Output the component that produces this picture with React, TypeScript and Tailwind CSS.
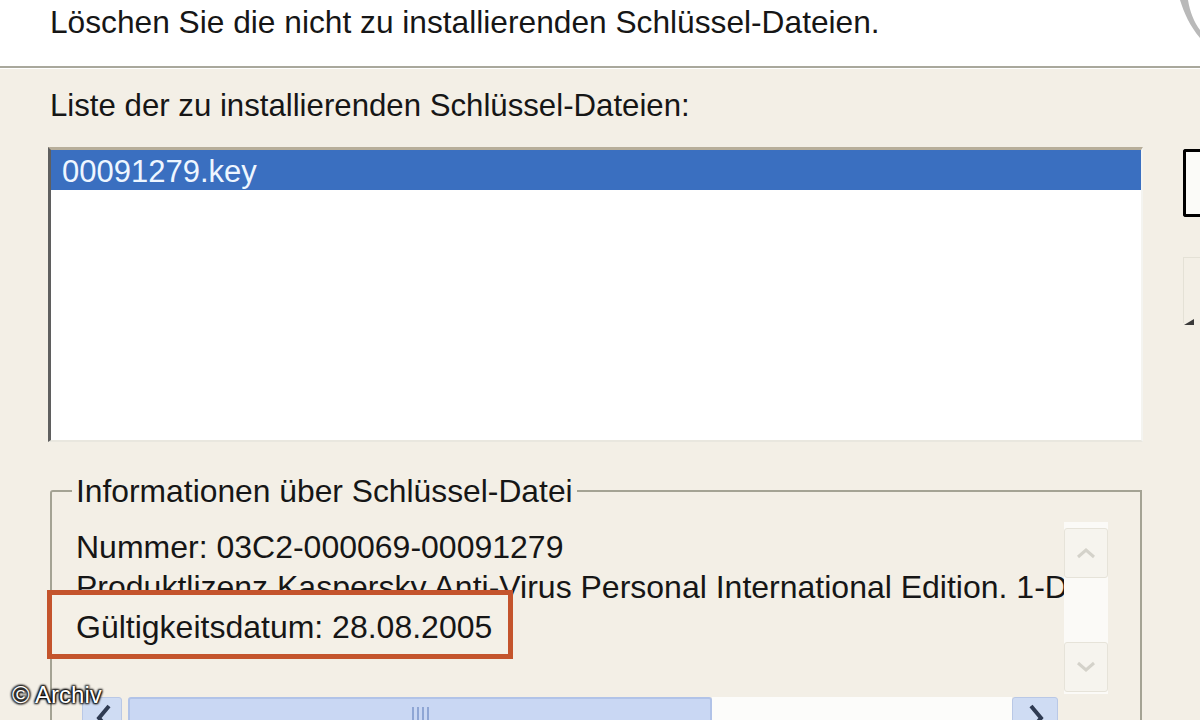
export default function App() {
  return (
    <div className="relative h-[720px] w-[1200px] overflow-hidden bg-[#f3efe6] font-['Liberation_Sans',Arial,sans-serif] text-[31px] leading-[36px] text-[#161616]">
      {/* Kopfbereich */}
      <div className="h-[66px] bg-white pl-[50px] pt-[4px]">
        <p className="whitespace-nowrap text-[31.7px]">Löschen Sie die nicht zu installierenden Schlüssel-Dateien.</p>
      </div>
      <svg className="absolute left-[1170px] top-0" width="30" height="50" viewBox="0 0 30 50">
        <path d="M10 0 C14 13 20 26 30 38 L30 30 C24 22 20 12 18 0 Z" fill="#b9b9b9" />
      </svg>
      <div className="h-[3px] border-t-2 border-[#a9a89c] bg-white" />

      <div className="flex">
        {/* Linke Spalte */}
        <div className="w-[1145px] pl-[48px]">
          <p className="mt-[19px] whitespace-nowrap pl-[2px] text-[31.2px]">Liste der zu installierenden Schlüssel-Dateien:</p>

          {/* Listbox */}
          <div className="mt-[23px] h-[295px] w-[1095px] border-l-[3px] border-t-[3px] border-r-2 border-b-2 border-l-[#5f5f5f] border-t-[#b7ae9a] border-r-[#f4f4f0] border-b-[#e9e7df] bg-white">
            <div className="flex h-[40px] w-[1090px] items-center bg-[#3a6fc0] pl-[11px] pt-[3px] text-[#eef6ff]">
              00091279.key
            </div>
          </div>

          {/* Gruppe */}
          <fieldset className="mt-[31px] ml-[2px] w-[1092px] rounded-tl-[3px] border-2 border-b-0 border-[#a4a394] pl-[20px] text-[31.8px]">
            <legend className="whitespace-nowrap px-[4px] leading-[36px]">Informationen über Schlüssel-Datei</legend>
            <div className="mt-[13px] w-[1040px]">
              <div className="flex h-[172px]">
                <div className="w-[992px] overflow-hidden whitespace-nowrap pl-[4px] pt-[5px] text-[32px] leading-[40px]">
                  <p>Nummer: 03C2-000069-00091279</p>
                  <p>Produktlizenz Kaspersky Anti-Virus Personal International Edition. 1-Desktop</p>
                  <p className="relative z-10">Gültigkeitsdatum: 28.08.2005</p>
                </div>
                {/* vertikale Bildlaufleiste */}
                <div className="flex w-[44px] flex-col bg-[#fbfaf7]">
                  <div className="mt-[6px] flex h-[50px] items-center justify-center rounded-[3px] border border-[#e6e3d9] bg-[#f6f4ee]">
                    <svg width="22" height="14" viewBox="0 0 22 14">
                      <path d="M3 11 L11 4 L19 11" fill="none" stroke="#d4d2ca" strokeWidth="3" />
                    </svg>
                  </div>
                  <div className="flex-1" />
                  <div className="mb-[2px] flex h-[50px] items-center justify-center rounded-[3px] border border-[#e6e3d9] bg-[#f6f4ee]">
                    <svg width="22" height="14" viewBox="0 0 22 14">
                      <path d="M3 3 L11 10 L19 3" fill="none" stroke="#d4d2ca" strokeWidth="3" />
                    </svg>
                  </div>
                </div>
              </div>

              {/* horizontale Bildlaufleiste */}
              <div className="flex h-[30px] pl-[10px] pt-[3px]">
                <div className="relative h-[40px] w-[40px] overflow-hidden rounded-[3px] border border-[#b9c8e6] bg-[#cfdcf3]">
                  <svg className="absolute left-[8px] top-[6px]" width="24" height="24" viewBox="0 0 24 24">
                    <path d="M18 2 L8 14 L18 26" fill="none" stroke="#2f3b52" strokeWidth="4" />
                  </svg>
                </div>
                <div className="ml-[6px] flex h-[40px] w-[584px] justify-center rounded-[3px] border-2 border-[#b1c3e8] bg-[#c9d7f3] pt-[8px]">
                  <div className="flex gap-[3px]">
                    <div className="h-[20px] w-[2px] bg-[#8fa6d4]" />
                    <div className="h-[20px] w-[2px] bg-[#8fa6d4]" />
                    <div className="h-[20px] w-[2px] bg-[#8fa6d4]" />
                    <div className="h-[20px] w-[2px] bg-[#8fa6d4]" />
                  </div>
                </div>
                <div className="h-[40px] w-[300px] bg-[#fcfcfa]" />
                <div className="relative h-[40px] w-[46px] overflow-hidden rounded-[3px] border border-[#b9c8e6] bg-[#cfdcf3]">
                  <svg className="absolute left-[12px] top-[6px]" width="24" height="24" viewBox="0 0 24 24">
                    <path d="M6 2 L16 14 L6 26" fill="none" stroke="#2f3b52" strokeWidth="4" />
                  </svg>
                </div>
              </div>
            </div>
          </fieldset>
        </div>

        {/* Rechte Spalte */}
        <div className="flex flex-col pl-[40px]">
          <div className="mt-[80px] h-[68px] w-[30px] rounded-l-[3px] border-y-[3px] border-l-[3px] border-black bg-[#fbfbf8]" />
          <div className="relative mt-[40px] h-[66px] w-[20px] border-l border-t border-[#e4e1d6]">
            <div className="absolute bottom-[-2px] left-0 h-0 w-0 border-b-[6px] border-l-[10px] border-b-[#3a3a3a] border-l-transparent" />
          </div>
        </div>
      </div>

      {/* Markierung */}
      <div className="absolute left-[47px] top-[590px] h-[69px] w-[466px] border-[5px] border-[#c4542c] bg-[#f4f0e7]" />

      {/* Wasserzeichen */}
      <p className="absolute left-[12px] top-[680px] text-[24px] leading-[30px] text-white [text-shadow:1px_1px_2px_#000,-1px_-1px_2px_#000,1px_-1px_2px_#000,-1px_1px_2px_#000]">
        © Archiv
      </p>
    </div>
  );
}
